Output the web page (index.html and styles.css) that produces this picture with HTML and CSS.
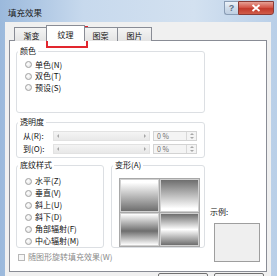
FILE: index.html
```html
<!DOCTYPE html>
<html lang="zh-CN">
<head>
  <meta charset="UTF-8">
  <title>填充效果</title>
  <link rel="stylesheet" href="styles.css">
</head>
<body>
  <div class="window">
    <div class="titlebar">
      <span class="title">填充效果</span>
      <div class="caption">
        <span class="btn-help">?</span>
        <span class="btn-close">
          <svg width="10" height="8" viewBox="0 0 10 8"><path d="M1.5 1 L8.5 7 M8.5 1 L1.5 7" stroke="#fff" stroke-width="1.8" fill="none"/></svg>
        </span>
      </div>
    </div>

    <div class="client">
      <div class="tabs">
        <span class="tab">渐变</span>
        <span class="tab active">纹理</span>
        <span class="tab">图案</span>
        <span class="tab">图片</span>
      </div>

      <div class="panel">
        <fieldset class="group g-color">
          <legend>颜色</legend>
          <div class="body">
            <label class="radio"><i></i>单色(N)</label>
            <label class="radio"><i></i>双色(T)</label>
            <label class="radio"><i></i>预设(S)</label>
          </div>
        </fieldset>

        <fieldset class="group g-alpha">
          <legend>透明度</legend>
          <div class="body">
            <div class="row">
              <span class="lbl">从(R):</span>
              <span class="scroll"><i class="left"></i><i class="right"></i></span>
              <span class="spin"><span class="val">0 %</span><span class="arrows"><i class="up"></i><i class="down"></i></span></span>
            </div>
            <div class="row">
              <span class="lbl">到(O):</span>
              <span class="scroll"><i class="left"></i><i class="right"></i></span>
              <span class="spin"><span class="val">0 %</span><span class="arrows"><i class="up"></i><i class="down"></i></span></span>
            </div>
          </div>
        </fieldset>

        <div class="bottom">
          <fieldset class="group g-style">
            <legend>底纹样式</legend>
            <div class="body">
              <label class="radio"><i></i>水平(Z)</label>
              <label class="radio"><i></i>垂直(V)</label>
              <label class="radio"><i></i>斜上(U)</label>
              <label class="radio"><i></i>斜下(D)</label>
              <label class="radio"><i></i>角部辐射(F)</label>
              <label class="radio"><i></i>中心辐射(M)</label>
            </div>
          </fieldset>
          <fieldset class="group g-variant">
            <legend>变形(A)</legend>
            <div class="body">
              <div class="variants">
                <span class="v v1"></span>
                <span class="v v2"></span>
                <span class="v v3"></span>
                <span class="v v4"></span>
              </div>
            </div>
          </fieldset>
        </div>

        <div class="sample">
          <span>示例:</span>
          <div class="sample-box"></div>
        </div>

        <label class="check"><i></i>随图形旋转填充效果(W)</label>
      </div>

      <div class="buttons">
        <span class="button"></span>
        <span class="button"></span>
      </div>
    </div>

    <div class="highlight"></div>
  </div>
</body>
</html>
```

FILE: styles.css
```css
* {
  box-sizing: border-box;
}
body {
  margin: 0;
  width: 277px;
  height: 276px;
  overflow: hidden;
  font-family: "Noto Sans CJK SC", "Liberation Sans", sans-serif;
  font-size: 8px;
  color: #111;
}
.window {
  position: relative;
  width: 277px;
  height: 276px;
  padding: 0 6px 0 5px;
  overflow: hidden;
  background: linear-gradient(to right, #9bb9dc, #c7d9ed 30%, #d3e1f0 70%, #b9cfe8);
}

/* title bar */
.titlebar {
  display: flex;
  height: 22px;
}
.title {
  padding: 7px 0 0 3px;
  font-size: 8.5px;
  line-height: 10px;
  color: #1a1a1a;
}
.caption {
  display: flex;
  margin-left: auto;
  margin-right: -3px;
  height: 15px;
  margin-top: 1px;
}
.btn-help {
  width: 14px;
  height: 14px;
  border: 1px solid #8a9db5;
  border-right: none;
  border-radius: 0 0 0 3px;
  background: linear-gradient(#eef3f9, #cfdcea 50%, #bfcfe2);
  color: #5c6f86;
  font-family: "Liberation Sans", sans-serif;
  font-size: 9px;
  font-weight: bold;
  line-height: 12px;
  text-align: center;
}
.btn-close {
  display: flex;
  align-items: center;
  justify-content: center;
  width: 36px;
  height: 14px;
  border: 1px solid #8a3b36;
  border-radius: 0 0 3px 0;
  background: linear-gradient(#e6a095, #d4574a 45%, #c23a2c 55%, #d05d4a);
}

/* client area */
.client {
  height: 254px;
  padding: 3px 4px 0 4px;
  background: #f0f0f0;
}
.tabs {
  display: flex;
  align-items: flex-end;
  height: 16px;
  padding-left: 5px;
  margin-bottom: -1px;
  position: relative;
  z-index: 1;
}
.tab {
  width: 35px;
  height: 14px;
  border: 1px solid #898c95;
  border-bottom: none;
  margin-right: -1px;
  background: linear-gradient(#f4f4f4, #e4e4e4);
  text-align: center;
  line-height: 10px;
  padding-top: 3px;
}
.tab.active {
  width: 39px;
  height: 16px;
  margin: 0 -2px 0 -2px;
  padding-top: 4px;
  background: #fff;
  position: relative;
  z-index: 2;
}

.panel {
  display: grid;
  grid-template-columns: 189px 52px;
  column-gap: 5px;
  align-items: start;
  align-content: start;
  width: 258px;
  height: 232px;
  padding: 5px 0 0 6px;
  border: 1px solid #898c95;
  background: #fff;
}

/* group boxes */
.group {
  margin: 0;
  padding: 0;
  min-width: 0;
  border: 1px solid #dcdfe3;
  border-radius: 3px;
}
.group legend {
  padding: 0 2px;
  margin-left: 1px;
  line-height: 10px;
}
.g-color {
  grid-column: 1;
}
.g-color .body {
  height: 56px;
  padding: 3px 0 0 8px;
}
.g-alpha {
  grid-column: 1;
  margin-top: 4px;
}
.g-alpha .body {
  height: 30px;
  padding: 2px 0 0 6px;
}
.bottom {
  grid-column: 1;
  grid-row: 3;
  display: flex;
  gap: 7px;
  margin-top: 2px;
}
.g-style {
  width: 88px;
}
.g-style .body {
  height: 77px;
  padding: 5px 0 0 8px;
}
.g-variant {
  flex: 1;
}
.g-variant .body {
  height: 77px;
  padding: 8px 0 0 7px;
}

/* radios and checks */
.radio {
  display: flex;
  align-items: center;
  gap: 3px;
  height: 11.5px;
  line-height: 10px;
}
.g-style .radio {
  height: 12px;
}
.radio i {
  width: 7px;
  height: 7px;
  border: 1px solid #a2a2a2;
  border-radius: 50%;
  background: radial-gradient(circle at 40% 40%, #fff, #dcdcdc);
}
.check {
  grid-column: 1 / 3;
  grid-row: 4;
  display: flex;
  align-items: center;
  gap: 3px;
  height: 10px;
  margin-top: 4px;
  padding-left: 2px;
  color: #8a8a8a;
  line-height: 10px;
}
.check i {
  width: 7px;
  height: 7px;
  border: 1px solid #b8b8b8;
  background: #f7f7f7;
}

/* transparency rows */
.row {
  display: flex;
  align-items: center;
  height: 13px;
}
.lbl {
  width: 30px;
  line-height: 10px;
}
.scroll {
  display: flex;
  justify-content: space-between;
  align-items: center;
  width: 97px;
  height: 10px;
  padding: 0 3px;
  border: 1px solid #e2e2e2;
  background: linear-gradient(#f4f4f4, #e8e8e8);
}
.scroll i {
  width: 0;
  height: 0;
  border-top: 2px solid transparent;
  border-bottom: 2px solid transparent;
}
.scroll .left {
  border-right: 2px solid #a6a6a6;
}
.scroll .right {
  border-left: 2px solid #a6a6a6;
}
.spin {
  display: flex;
  width: 44px;
  height: 10px;
  margin-left: 3px;
  border: 1px solid #d3d3d3;
  background: #f4f4f4;
}
.val {
  flex: 1;
  padding-left: 3px;
  color: #6d6d6d;
  font-size: 7px;
  line-height: 8px;
}
.arrows {
  display: flex;
  flex-direction: column;
  justify-content: space-around;
  align-items: center;
  width: 10px;
  border-left: 1px solid #d8d8d8;
}
.arrows i {
  width: 0;
  height: 0;
  border-left: 2px solid transparent;
  border-right: 2px solid transparent;
}
.arrows .up {
  border-bottom: 2px solid #a8a8a8;
}
.arrows .down {
  border-top: 2px solid #a8a8a8;
}

/* variants */
.variants {
  display: grid;
  grid-template-columns: 39px 39px;
  grid-template-rows: 33px 33px;
  gap: 1px;
  width: 81px;
  border: 1px solid #a8a8a8;
  background: #a8a8a8;
}
.v {
  border: 1px solid #d0d0d0;
}
.v1 {
  background: linear-gradient(#fff 8%, #6e6e6e);
}
.v2 {
  background: linear-gradient(#6e6e6e, #fff 92%);
}
.v3 {
  background: linear-gradient(#fff, #6e6e6e 55%, #fff);
}
.v4 {
  background: linear-gradient(#6e6e6e, #fff 50%, #6e6e6e);
}

/* sample */
.sample {
  grid-column: 2;
  grid-row: 3 / 5;
  align-self: end;
  line-height: 10px;
}
.sample-box {
  width: 46px;
  height: 39px;
  margin: 6px 0 0 4px;
  border: 1px solid #9e9e9e;
  background: #efefef;
}

/* dialog buttons (cut off at the bottom) */
.buttons {
  display: flex;
  justify-content: flex-end;
  gap: 6px;
  padding: 1px 3px 0 0;
}
.button {
  width: 50px;
  height: 16px;
  border: 1px solid #707070;
  border-radius: 2px;
  background: linear-gradient(#f2f2f2, #dddddd);
}

/* red annotation box over the active tab */
.highlight {
  position: absolute;
  left: 46px;
  top: 26px;
  width: 42px;
  height: 22px;
  border: 2px solid #e2262e;
}
```
